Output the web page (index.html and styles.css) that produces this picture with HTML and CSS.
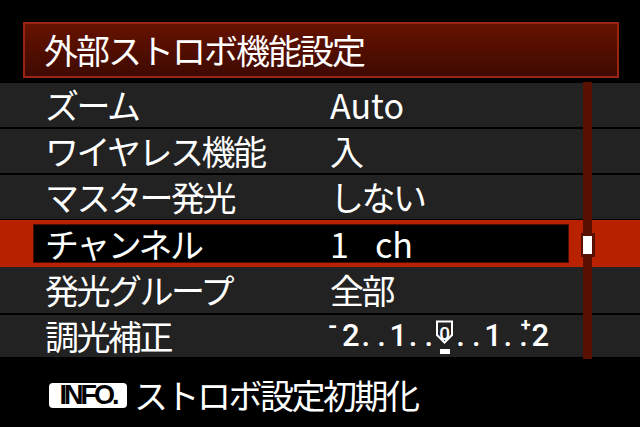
FILE: index.html
```html
<!DOCTYPE html>
<html lang="ja">
<head>
<meta charset="utf-8">
<title>外部ストロボ機能設定</title>
<link rel="stylesheet" href="styles.css">
</head>
<body>
<div class="screen">
  <div class="title"><span class="title-text">外部ストロボ機能設定</span></div>
  <div class="list">
    <div class="row r1"><span class="label">ズーム</span><span class="value latin">Auto</span></div>
    <div class="row"><span class="label">ワイヤレス機能</span><span class="value">入</span></div>
    <div class="row r3"><span class="label">マスター発光</span><span class="value">しない</span></div>
    <div class="row sel">
      <div class="box"><span class="label">チャンネル</span><span class="value latin">1<span class="ch">ch</span></span></div>
    </div>
    <div class="row r5"><span class="label">発光グループ</span><span class="value">全部</span></div>
    <div class="row r6"><span class="label">調光補正</span>
      <span class="value scale">
        <span class="minus">-</span>
        <span class="cell">2</span><span class="cell">.</span><span class="cell">.</span>
        <span class="cell">1</span><span class="cell">.</span><span class="cell">.</span>
        <span class="cell zero"><svg class="pin" width="19" height="24" viewBox="0 0 19 24"><path d="M2 1.5 H17 V15 L9.5 22.5 L2 15 Z" fill="none" stroke="#fff" stroke-width="2"/></svg><span class="z">0</span><span class="mark"></span></span>
        <span class="cell">.</span><span class="cell">.</span>
        <span class="cell">1</span><span class="cell">.</span><span class="cell stack"><span class="plus">+</span><span class="dot">.</span></span>
        <span class="cell">2</span>
      </span>
    </div>
    <div class="scrollbar"><div class="thumb"></div></div>
  </div>
  <div class="footer">
    <span class="badge">INFO.</span>
    <span class="footer-text">ストロボ設定初期化</span>
  </div>
</div>
</body>
</html>
```
FILE: styles.css
```css
html, body {
  margin: 0;
  padding: 0;
  background: #000;
}
body {
  width: 640px;
  height: 427px;
  overflow: hidden;
  font-family: "Noto Sans CJK JP", "Noto Sans", sans-serif;
  color: #fff;
}
.screen {
  display: flex;
  flex-direction: column;
  height: 427px;
}
.title {
  margin: 22px 21px 0 23px;
  height: 52px;
  border: 2px solid #9a2410;
  background: linear-gradient(#661200, #3e0a02);
  display: flex;
  align-items: center;
  padding-left: 19px;
}
.title-text {
  font-size: 34px;
  letter-spacing: -2px;
  line-height: 1;
}
.list {
  position: relative;
  margin-top: 5px;
  display: flex;
  flex-direction: column;
}
.row {
  display: grid;
  grid-template-columns: 285px 1fr;
  align-items: center;
  height: 44px;
  margin-top: 2px;
  padding-left: 45px;
  background: #222;
}
.row.r1 { margin-top: 0; }
.row.sel {
  display: flex;
  margin-top: 1px;
  height: 47px;
  padding: 4px 0 4px 33px;
  box-sizing: border-box;
  background: #b82200;
}
.row.r5 { margin-top: 0; height: 46px; }
.row.r6 { height: 42px; }
.box {
  width: 536px;
  height: 39px;
  box-sizing: border-box;
  border: 1px solid #4c0c00;
  background: #000;
  display: grid;
  grid-template-columns: 285px 1fr;
  align-items: center;
  padding-left: 11px;
}
.label, .value {
  font-size: 34px;
  letter-spacing: -2.5px;
  line-height: 1;
  white-space: nowrap;
}
.value.latin {
  letter-spacing: 0;
}
.ch {
  margin-left: 26px;
}
.scale {
  display: flex;
  align-items: center;
  font-family: Roboto, "Noto Sans", sans-serif;
  font-size: 31px;
  font-weight: 500;
  letter-spacing: 0;
  margin-left: -2px;
}
.minus {
  width: 14px;
  font-size: 24px;
  font-weight: bold;
  line-height: 20px;
  position: relative;
  top: -10px;
  text-align: left;
}
.cell {
  width: 15.8px;
  height: 30px;
  line-height: 30px;
  text-align: center;
  position: relative;
}
.pin {
  position: absolute;
  left: -1.6px;
  top: -1px;
}
.zero .z {
  position: absolute;
  left: 0;
  right: 0;
  top: 3px;
  font-size: 19px;
  line-height: 20px;
  text-align: center;
}
.mark {
  position: absolute;
  left: 3px;
  top: 28px;
  width: 10px;
  height: 5px;
  background: #fff;
}
.stack {
  display: flex;
  flex-direction: column;
  align-items: center;
  justify-content: flex-start;
}
.plus {
  font-size: 18px;
  font-weight: bold;
  line-height: 8px;
  height: 8px;
  margin-left: 4px;
}
.dot {
  line-height: 14px;
  height: 14px;
}
.scrollbar {
  position: absolute;
  left: 583px;
  top: -1px;
  width: 9px;
  height: 277px;
  background: #5a1000;
}
.thumb {
  position: absolute;
  left: -2px;
  top: 151px;
  width: 9px;
  height: 18px;
  border: 3px solid #5a1000;
  border-left-width: 2px;
  border-right-width: 3px;
  background: #fff;
}
.footer {
  display: flex;
  align-items: center;
  margin-top: 21px;
  padding-left: 49px;
  gap: 7px;
}
.badge {
  background: #fff;
  color: #000;
  border-radius: 4px;
  width: 78px;
  height: 25px;
  display: flex;
  align-items: center;
  justify-content: center;
  font-family: "Liberation Sans", Arial, sans-serif;
  font-weight: bold;
  font-size: 27px;
  letter-spacing: -3px;
  line-height: 1;
}
.footer-text {
  font-size: 34px;
  letter-spacing: -2.5px;
  line-height: 1;
}
```
